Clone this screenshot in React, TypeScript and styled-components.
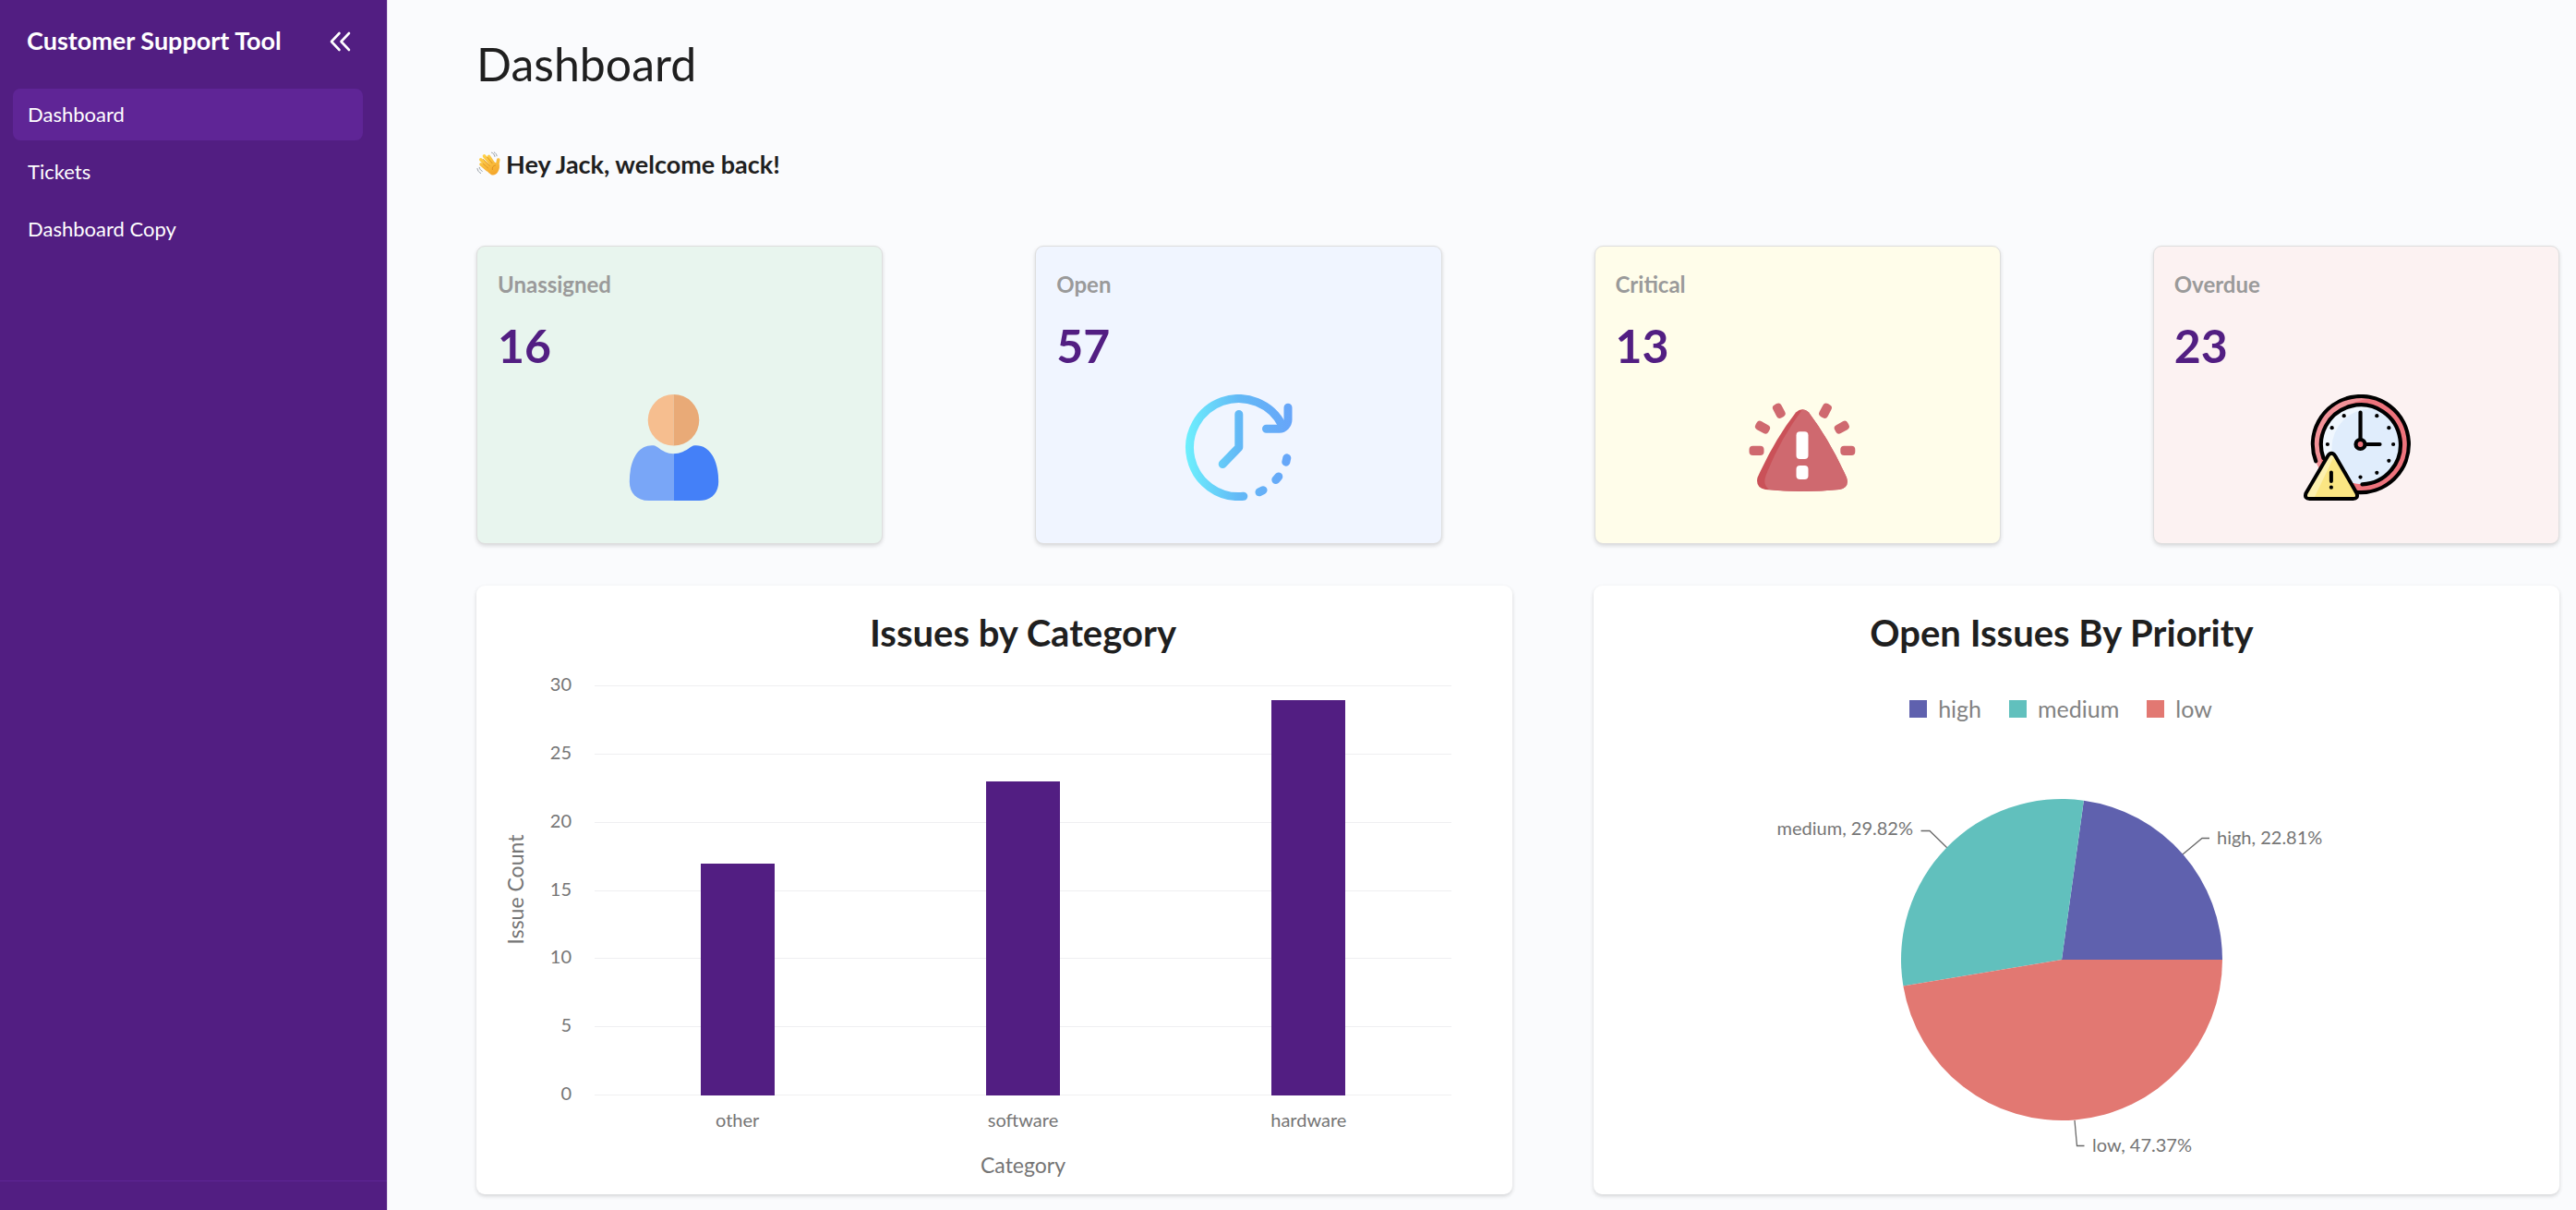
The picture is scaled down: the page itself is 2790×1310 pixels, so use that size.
import React from "react";
import styled, { createGlobalStyle } from "styled-components";

const GlobalStyle = createGlobalStyle`
  *, *::before, *::after { box-sizing: border-box; }
  body {
    margin: 0;
    background: #fafbfd;
    color: #1f1f1f;
    font-family: Lato, "Open Sans", sans-serif;
  }
  h1, h2, p, ul, dl, dd { margin: 0; padding: 0; }
  ul { list-style: none; }
`;

const colors = {
  purple: "#521e82",
  purpleLight: "#5f2596",
  muted: "#9a9a9a",
  axis: "#757575",
  grid: "#efeff1",
  high: "#5f61ae",
  medium: "#61c0bd",
  low: "#e27872",
};

const Shell = styled.div`
  display: flex;
  min-height: 100vh;
`;

const Sidebar = styled.aside`
  flex: 0 0 420px;
  display: flex;
  flex-direction: column;
  background: ${colors.purple};
  border-right: 1px solid #e3dcec;
  color: #fff;
`;

const SidebarHeader = styled.div`
  display: flex;
  align-items: center;
  justify-content: space-between;
  padding: 28px 39px 36px 29px;
`;

const AppName = styled.p`
  font-size: 27px;
  line-height: 32px;
  font-weight: 700;
`;

const CollapseButton = styled.button`
  display: flex;
  padding: 0;
  border: 0;
  background: none;
  color: inherit;
  cursor: pointer;
`;

const NavList = styled.ul`
  display: flex;
  flex-direction: column;
  gap: 6px;
  padding: 0 26px 0 14px;
`;

const NavLink = styled.a<{ $active?: boolean }>`
  display: block;
  padding: 0 16px;
  border-radius: 8px;
  background: ${(p) => (p.$active ? colors.purpleLight : "transparent")};
  color: #fff;
  font-size: 22px;
  line-height: 56px;
  text-decoration: none;
`;

const SidebarFooter = styled.div`
  height: 32px;
  margin-top: auto;
  border-top: 1px solid ${colors.purpleLight};
`;

const Main = styled.main`
  flex: 1;
  min-width: 0;
  padding: 41px 18px 16px 96px;
`;

const PageTitle = styled.h1`
  font-size: 50px;
  line-height: 56px;
  font-weight: 400;
`;

const Greeting = styled.p`
  display: flex;
  align-items: center;
  gap: 4px;
  margin: 65px 0 72px;
  font-size: 27px;
  line-height: 32px;
  font-weight: 700;
`;

const StatGrid = styled.dl`
  display: grid;
  grid-template-columns: repeat(4, 1fr);
  gap: 165px;
`;

const StatCard = styled.div<{ $tint: string }>`
  display: flex;
  flex-direction: column;
  padding: 25px 22px 46px;
  border: 1px solid #dedede;
  border-radius: 9px;
  background: ${(p) => p.$tint};
  box-shadow: 0 2px 4px rgba(0, 0, 0, 0.14);
`;

const StatLabel = styled.dt`
  color: ${colors.muted};
  font-size: 24px;
  line-height: 32px;
  font-weight: 700;
`;

const StatValue = styled.dd`
  margin: 22px 0 25px;
  color: ${colors.purple};
  font-size: 50px;
  line-height: 56px;
  font-weight: 700;
`;

const StatIcon = styled.dd`
  display: flex;
  justify-content: center;
`;

const ChartGrid = styled.div`
  display: grid;
  grid-template-columns: 1122fr 1046fr;
  gap: 88px;
  margin-top: 45px;
`;

const ChartCard = styled.section`
  padding-top: 27px;
  border-radius: 9px;
  background: #fff;
  box-shadow: 0 2px 4px rgba(0, 0, 0, 0.16);
`;

const ChartTitle = styled.h2<{ $inset: string }>`
  padding: ${(p) => p.$inset};
  font-size: 40px;
  line-height: 48px;
  font-weight: 700;
  text-align: center;
`;

const ChartSvg = styled.svg`
  display: block;
  width: 100%;
  height: auto;
  fill: ${colors.axis};
  font-size: 20px;
`;

const AxisTitle = styled.text`
  font-size: 23px;
`;

const Legend = styled.ul`
  display: flex;
  justify-content: center;
  gap: 30px;
  padding: 42px 34px 0 0;
`;

const LegendItem = styled.li<{ $color: string }>`
  display: flex;
  align-items: center;
  gap: 12px;
  color: #828282;
  font-size: 25px;
  line-height: 32px;

  &::before {
    content: "";
    width: 19px;
    height: 19px;
    background: ${(p) => p.$color};
  }
`;

function CollapseIcon() {
  return (
    <svg width="24" height="24" viewBox="0 0 24 24" fill="none" stroke="currentColor" strokeWidth="2.6" strokeLinecap="round" strokeLinejoin="round" aria-hidden="true">
      <path d="M11.500 4 3 13l8.500 9M22 4l-8.500 9 8.500 9" />
    </svg>
  );
}

function WaveIcon() {
  return (
    <svg width="28" height="28" viewBox="0 0 28 28" fill="none" strokeLinecap="round" strokeLinejoin="round" aria-hidden="true">
      <defs>
        <linearGradient id="handGradient" gradientUnits="userSpaceOnUse" x1="8" y1="4" x2="18" y2="27">
          <stop offset="0" stopColor="#fed24b" />
          <stop offset="1" stopColor="#f3a32a" />
        </linearGradient>
      </defs>
      <g stroke="url(#handGradient)" strokeWidth="3.600">
        <path d="M11.500 19.500 5 14M13.500 16.500 4.800 8.800M16 14 8.500 5M18.500 13 13.500 5.500" />
        <path d="M22.800 17c-.6-3 .4-5.500 1-8" />
      </g>
      <path d="M9.800 18.500 19.500 11.500 24.600 14c.8 4-.6 8.500-3.600 10.500-3.500 2.300-6.500 1-11.200-6z" fill="url(#handGradient)" />
      <path d="M7 13.200l5.500 4.700M7.500 8.500l6.800 7M11.800 6.200l5.200 6.500M20.500 15c-2.400.3-3.700 2.200-3.200 4.600" stroke="#d98a1b" strokeWidth=".8" />
      <path d="M1 18.500c.4 2.400 1.600 4 3.600 5M3.200 17.300c.4 1.800 1.400 3.200 3 4M16.500 1.200c1.800.6 3 2 3.400 4.200M14.500 2.200M19.300 1c1.500.7 2.500 2 2.800 3.800" stroke="#8b939b" strokeWidth=".9" />
    </svg>
  );
}

function PersonIcon() {
  return (
    <svg width="128" height="115" viewBox="0 0 128 115" aria-hidden="true">
      <path d="M57.500 0a27.800 27.800 0 0 0 0 55.600z" fill="#f6be8f" />
      <path d="M57.500 0a27.800 27.800 0 0 1 0 55.600z" fill="#e9aa77" />
      <path d="M57.500 64.300c-7 0-12-3-17.500-7.200-2-1.500-3.500-1.800-6-1.800C18 55.300 9.800 73 9.800 94.500 9.800 107 18 115 30.500 115h27z" fill="#79a6f7" />
      <path d="M57.500 64.300c7 0 13-3 18.500-7.200 2-1.500 3.500-1.800 6-1.800 16 0 24.200 17.700 24.200 39.200C106.200 107 98 115 85.500 115h-28z" fill="#4480f8" />
    </svg>
  );
}

function OpenIcon() {
  return (
    <svg width="128" height="115" viewBox="0 0 128 115" fill="none" stroke="url(#openGradient)" strokeWidth="9" strokeLinecap="round" strokeLinejoin="round" aria-hidden="true">
      <defs>
        <linearGradient id="openGradient" gradientUnits="userSpaceOnUse" x1="7" y1="0" x2="122" y2="0">
          <stop offset="0" stopColor="#6df0fd" />
          <stop offset="0.5" stopColor="#63b9f6" />
          <stop offset="1" stopColor="#67a5f9" />
        </linearGradient>
      </defs>
      <path d="M69.800 110.300A53 53 0 1 1 112 34" />
      <path d="M118 14.300V27.500A10 10 0 0 1 108.500 37.300H94.500" />
      <path d="M64.800 21.500V57.300L47.200 75.500" />
      <path d="M116.800 68.800 115.800 73.200M107.800 89 104.800 92.500M91 103.700 87 105.800" />
    </svg>
  );
}

function CriticalIcon() {
  const rays = (
    <g fill="#cf696f">
      <rect x="11.500" y="55.800" width="16" height="10.200" rx="4" />
      <rect x="18" y="30.600" width="16" height="10.200" rx="4" transform="rotate(29 26 35.700)" />
      <rect x="35.800" y="12.600" width="16" height="10.200" rx="4" transform="rotate(62 43.800 17.700)" />
    </g>
  );
  return (
    <svg width="128" height="115" viewBox="0 0 128 115" aria-hidden="true">
      {rays}
      <g transform="matrix(-1 0 0 1 137.800 0)">{rays}</g>
      <path d="M62 19.500q7-6.500 14 0Q99 50 117 90q3.500 11-8 13-40 4-80 0-11-2-8.500-13Q39 49 62 19.500z" fill="#ca5158" />
      <path d="M69 16.400q4.500 0 7 3.100Q99 50 117 90q3.500 11-8 13-38 4-76 0-7-5-3.500-15Q44 50 69 16.400z" fill="#cf696f" />
      <rect x="62.500" y="40.300" width="13" height="29.700" rx="4" fill="#fff" />
      <rect x="62.500" y="77" width="13" height="15" rx="4" fill="#fff" />
    </svg>
  );
}

function OverdueIcon() {
  const marks = [30, 60, 90, 120, 150, 180, 270, 300, 330];
  return (
    <svg width="128" height="115" viewBox="0 0 128 115" fill="none" strokeLinecap="round" strokeLinejoin="round" aria-hidden="true">
      <defs>
        <clipPath id="clockRim"><circle cx="68.500" cy="54" r="52" /></clipPath>
        <clipPath id="clockFace"><circle cx="68.500" cy="54" r="43" /></clipPath>
      </defs>
      <g clipPath="url(#clockRim)">
        <circle cx="68.500" cy="54" r="52" fill="#f29298" />
        <circle cx="82" cy="62" r="57" fill="#ee737c" />
      </g>
      <g clipPath="url(#clockFace)">
        <circle cx="68.500" cy="54" r="43" fill="#f0f7fe" />
        <circle cx="80" cy="58" r="42.500" fill="#e0edfc" />
      </g>
      <g stroke="#000" strokeWidth="4.200">
        <path d="M64 105.800A52 52 0 1 0 20.200 72.300" />
        <path d="M70.500 97.300A43 43 0 1 0 28.500 69" />
        <path d="M68.500 54V19.500M68.500 54H89.500" />
        <circle cx="68.500" cy="54" r="5" fill="#ee737c" />
      </g>
      {marks.map((deg) => (
        <circle
          key={deg}
          cx={68.5 + 35.6 * Math.sin((deg * Math.PI) / 180)}
          cy={54 - 35.6 * Math.cos((deg * Math.PI) / 180)}
          r="2.100"
          fill="#000"
        />
      ))}
      <path d="M33 67q4.200-5.500 8.400 0L65 107q2 6-4 6H13.500q-6 0-4-6z" fill="#fbe683" />
      <path d="M33 67q4-4 7 0L18.500 112h-6q-5-1-3-5z" fill="#fdf0ae" />
      <g stroke="#000" strokeWidth="4">
        <path d="M33 67q4.200-6.500 8.400 0L64.500 107q2 6-4 6H13.500q-6 0-4-6z" />
        <path d="M36.900 84.500V94" />
      </g>
      <circle cx="36.900" cy="100.700" r="2.100" fill="#000" />
    </svg>
  );
}

const navItems = [
  { label: "Dashboard", active: true },
  { label: "Tickets" },
  { label: "Dashboard Copy" },
];

const stats = [
  { label: "Unassigned", value: 16, tint: "#e8f5ee", Icon: PersonIcon },
  { label: "Open", value: 57, tint: "#f0f5ff", Icon: OpenIcon },
  { label: "Critical", value: 13, tint: "#fffdea", Icon: CriticalIcon },
  { label: "Overdue", value: 23, tint: "#fcf2f2", Icon: OverdueIcon },
];

const categories = [
  { name: "other", count: 17 },
  { name: "software", count: 23 },
  { name: "hardware", count: 29 },
];

function CategoryChart() {
  const left = 128;
  const right = 1056;
  const base = 476;
  const unit = 443 / 30;
  const band = (right - left) / categories.length;
  const ticks = [0, 5, 10, 15, 20, 25, 30];
  return (
    <ChartSvg viewBox="0 0 1122 584" role="img" aria-label="Issues by Category">
      {ticks.map((t) => {
        const y = Math.round(base - t * unit);
        return (
          <g key={t}>
            <rect x={left} y={y} width={right - left} height="1" fill={colors.grid} />
            <text x="103" y={y + 6} textAnchor="end">{t}</text>
          </g>
        );
      })}
      {categories.map((c, i) => {
        const center = left + band * (i + 0.5);
        const top = Math.round(base - c.count * unit) + 1;
        return (
          <g key={c.name}>
            <rect x={Math.round(center - 40)} y={top} width="80" height={base + 1 - top} fill={colors.purple} />
            <text x={center} y="511" textAnchor="middle">{c.name}</text>
          </g>
        );
      })}
      <AxisTitle x="592" y="561" textAnchor="middle">Category</AxisTitle>
      <AxisTitle transform="translate(51 254) rotate(-90)" textAnchor="middle">Issue Count</AxisTitle>
    </ChartSvg>
  );
}

const priorities = [
  { name: "high", share: 22.81, color: colors.high, leader: "M638 142 659 124.500H667", x: 675, y: 131, anchor: "start" as const },
  { name: "medium", share: 29.82, color: colors.medium, leader: "M383 135 364 116.500H354.500", x: 346, y: 121, anchor: "end" as const },
  { name: "low", share: 47.37, color: colors.low, leader: "M521 430 523.500 457.500H531.500", x: 540, y: 464, anchor: "start" as const },
];

function PriorityChart() {
  const cx = 507;
  const cy = 256;
  const r = 174;
  let start = 0;
  const point = (share: number) => {
    const a = (share / 100) * 2 * Math.PI;
    return `${cx + r * Math.cos(a)} ${cy - r * Math.sin(a)}`;
  };
  return (
    <ChartSvg viewBox="0 0 1046 510" role="img" aria-label="Open Issues By Priority">
      {priorities.map((p) => {
        const from = start;
        start += p.share;
        return (
          <g key={p.name}>
            <path d={p.leader} fill="none" stroke="#6a6a6a" strokeWidth="1.300" />
            <path d={`M${cx} ${cy}L${point(from)}A${r} ${r} 0 0 0 ${point(start)}Z`} fill={p.color} />
            <text x={p.x} y={p.y} textAnchor={p.anchor}>{`${p.name}, ${p.share.toFixed(2)}%`}</text>
          </g>
        );
      })}
    </ChartSvg>
  );
}

export default function App() {
  return (
    <>
      <GlobalStyle />
      <Shell>
        <Sidebar>
          <SidebarHeader>
            <AppName>Customer Support Tool</AppName>
            <CollapseButton type="button" aria-label="Collapse sidebar">
              <CollapseIcon />
            </CollapseButton>
          </SidebarHeader>
          <nav>
            <NavList>
              {navItems.map((item) => (
                <li key={item.label}>
                  <NavLink href="#" $active={item.active} aria-current={item.active ? "page" : undefined}>
                    {item.label}
                  </NavLink>
                </li>
              ))}
            </NavList>
          </nav>
          <SidebarFooter />
        </Sidebar>
        <Main>
          <PageTitle>Dashboard</PageTitle>
          <Greeting>
            <WaveIcon />
            Hey Jack, welcome back!
          </Greeting>
          <StatGrid>
            {stats.map(({ label, value, tint, Icon }) => (
              <StatCard key={label} $tint={tint}>
                <StatLabel>{label}</StatLabel>
                <StatValue>{value}</StatValue>
                <StatIcon>
                  <Icon />
                </StatIcon>
              </StatCard>
            ))}
          </StatGrid>
          <ChartGrid>
            <ChartCard>
              <ChartTitle $inset="0 66px 0 128px">Issues by Category</ChartTitle>
              <CategoryChart />
            </ChartCard>
            <ChartCard>
              <ChartTitle $inset="0 32px 0 0">Open Issues By Priority</ChartTitle>
              <Legend>
                {priorities.map((p) => (
                  <LegendItem key={p.name} $color={p.color}>{p.name}</LegendItem>
                ))}
              </Legend>
              <PriorityChart />
            </ChartCard>
          </ChartGrid>
        </Main>
      </Shell>
    </>
  );
}
